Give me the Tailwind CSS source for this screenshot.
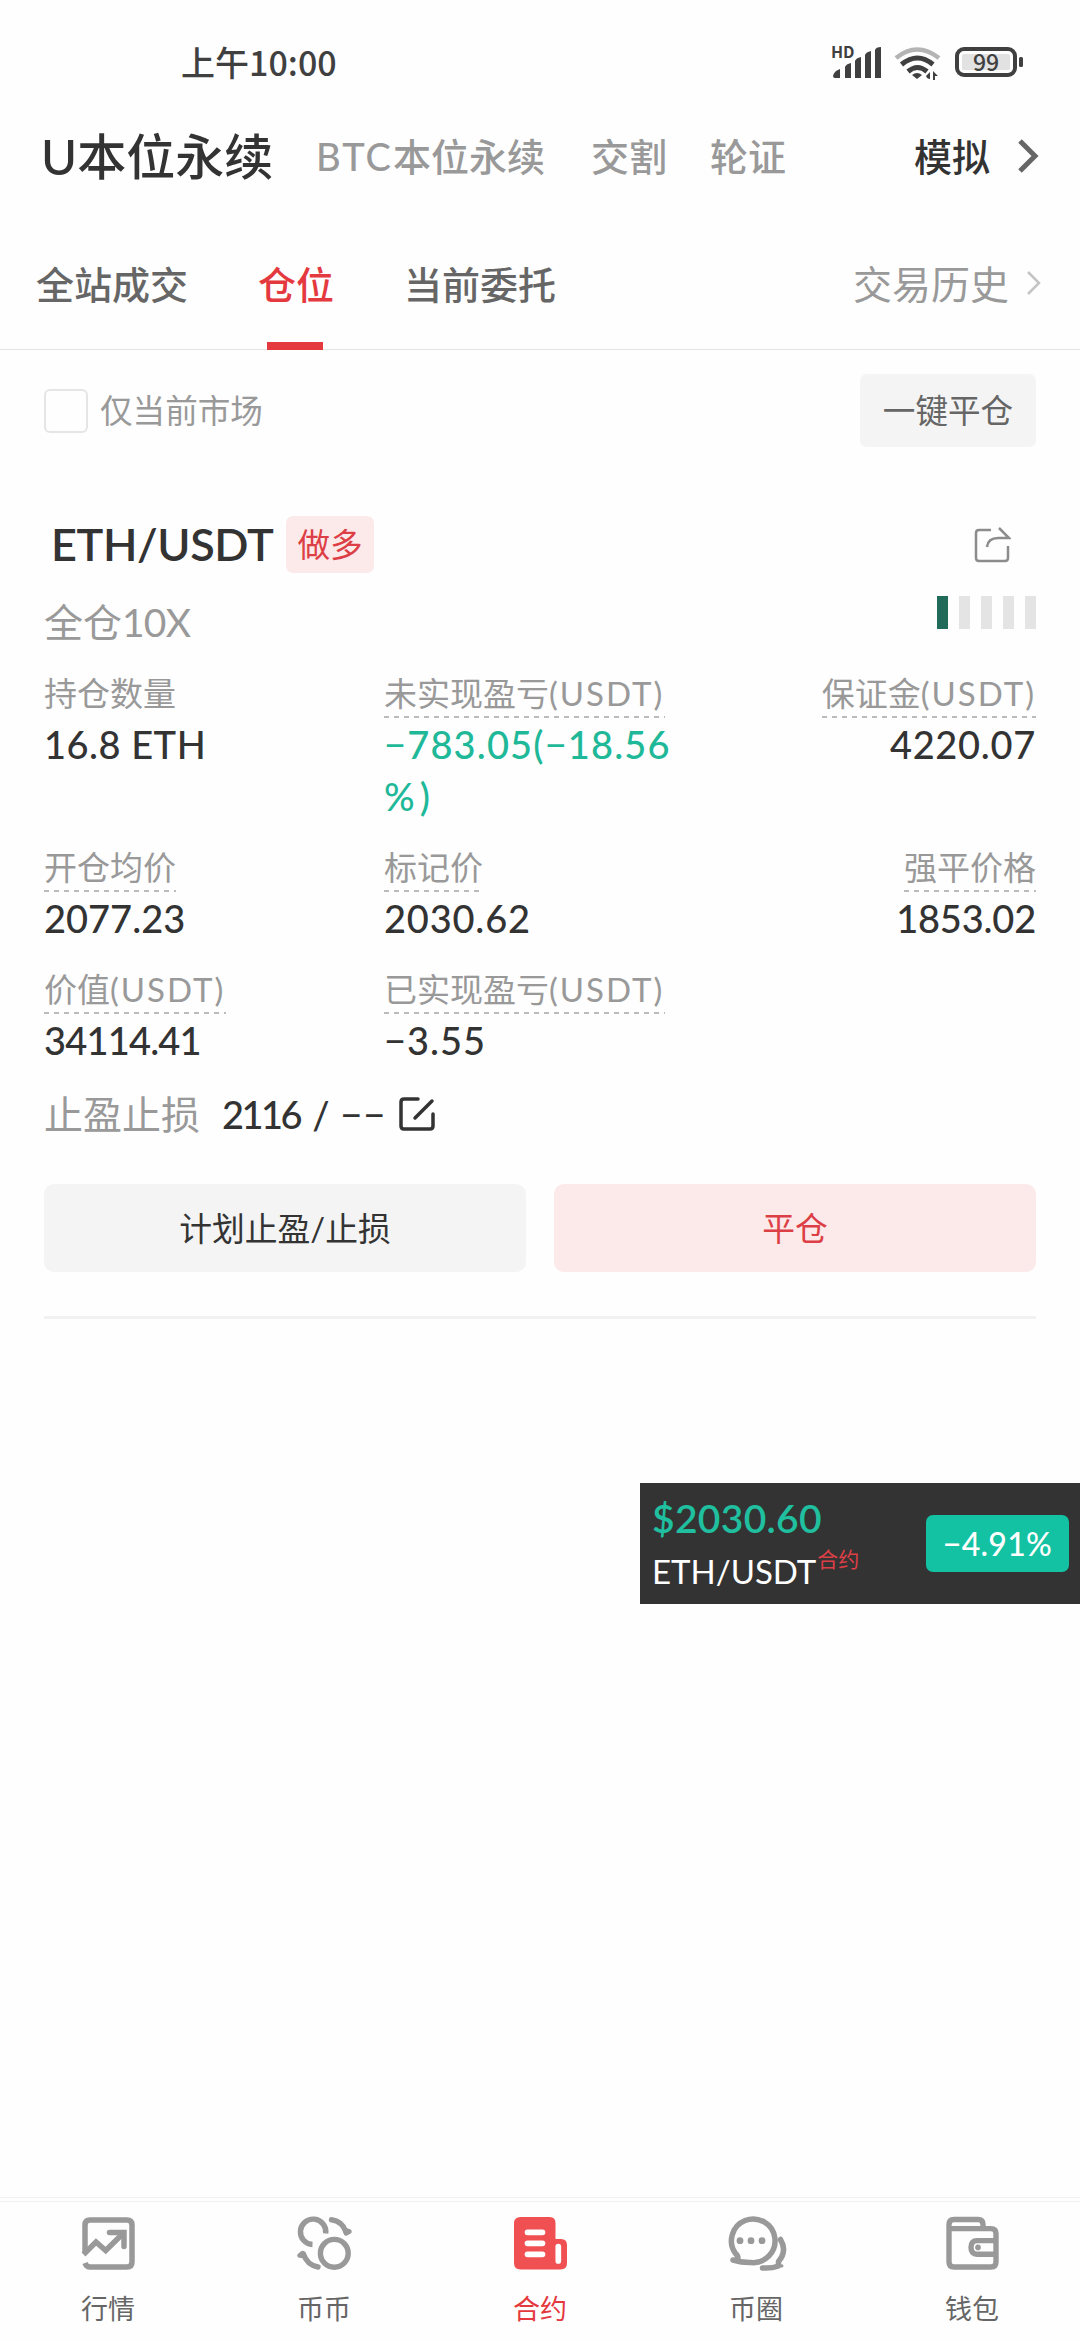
<!DOCTYPE html>
<html lang="zh-CN">
<head>
<meta charset="utf-8">
<title>合约</title>
<script src="https://cdn.jsdelivr.net/npm/@tailwindcss/browser@4"></script>
</head>
<body class="bg-[#fefefe]">
<div class="relative flex h-[2340px] w-[1080px] flex-col overflow-hidden bg-[#fefefe] font-['Lato','Noto_Sans_CJK_SC',sans-serif] text-[#333]">

  <!-- status bar -->
  <header class="flex h-[124px] shrink-0 items-center justify-between pr-[56px] pl-[181px]">
    <span class="font-['Noto_Sans_CJK_SC',sans-serif] text-[34px] leading-[40px] font-medium text-[#404040]">上午10:00</span>
    <svg class="h-[60px] w-[198px] overflow-visible" viewBox="826 32 198 60" fill="#404040">
      <text x="831" y="58" font-size="16" font-weight="700" font-family="Noto Sans CJK SC, sans-serif">HD</text>
      <path d="M833 76q1-5 7-7v9h-5q-2 0-2-2zM845 67q1-3 6-4v15h-6zM855 61q1-3 6-4v21h-6zM865 55q1-3 6-4v27h-6zM875 50q1-3 6-3v31h-6z"/>
      <path d="M896 58q21-17 43 0" fill="none" stroke="#b4b4b4" stroke-width="4.5"/>
      <path d="M901.500 64.500q16-13 31.500 0M908 71.500q9.500-8 19 0" fill="none" stroke="#404040" stroke-width="5"/>
      <path d="M912 75q5-4 10 0l-5 4zM926 76l4-4v7q-3 0-4-3zM933 80v-9l5 5h-3v4z"/>
      <rect x="957" y="49" width="58" height="26" rx="7" fill="none" stroke="#404040" stroke-width="4"/>
      <rect x="962" y="54" width="48" height="16" rx="2" fill="#e2e2e2"/>
      <rect x="1019" y="57" width="4" height="10" rx="1.500"/>
      <text x="986" y="70.500" font-size="23" font-weight="500" text-anchor="middle" font-family="Noto Sans CJK SC, sans-serif">99</text>
    </svg>
  </header>

  <!-- market types -->
  <nav class="flex h-[64px] shrink-0 items-center pr-[41px] pl-[41px] text-[38px] leading-[64px] font-medium text-[#999]">
    <span class="w-[275px] text-[49px] text-[#333]">U本位永续</span>
    <span class="w-[275px]"><span class="tracking-[2px]">BTC</span>本位永续</span>
    <span class="w-[119px]">交割</span>
    <span>轮证</span>
    <span class="ml-auto text-[#333]">模拟</span>
    <svg class="ml-[28px] h-[34px] w-[21px]" viewBox="0 0 21 34" fill="none" stroke="#666" stroke-width="5"><path d="M2 2l15 15L2 32"/></svg>
  </nav>

  <!-- tabs -->
  <nav class="flex h-[162px] shrink-0 items-end border-b border-[#e2e5e6] pr-[38px] pl-[36px] text-[38px] leading-[130px] font-medium text-[#666]">
    <span class="w-[222px]">全站成交</span>
    <span class="relative w-[146px] text-[#e4393f]">仓位<i class="absolute bottom-[-1px] left-[9px] h-[8px] w-[56px] bg-[#e4393f]"></i></span>
    <span>当前委托</span>
    <span class="ml-auto text-[39px] font-normal text-[#999]">交易历史</span>
    <svg class="mb-[54px] ml-[17px] h-[24px] w-[16px]" viewBox="0 0 16 24" fill="none" stroke="#c4c4c4" stroke-width="2.500"><path d="M2 1l11 11L2 23"/></svg>
  </nav>

  <main class="flex flex-col px-[44px]">
    <div class="mt-[24px] flex h-[73px] items-center">
      <span class="h-[44px] w-[44px] rounded-[6px] border-[2.5px] border-[#e5e5e5]"></span>
      <span class="ml-[12px] text-[32.6px] leading-[73px] text-[#999]">仅当前市场</span>
      <span class="ml-auto w-[176px] rounded-[7px] bg-[#f4f4f4] text-center text-[32.6px] leading-[73px] text-[#666]">一键平仓</span>
    </div>

    <div class="mt-[69px] flex h-[57px] items-center">
      <h1 class="ml-[7px] w-[235px] text-[45px] leading-[57px] font-semibold tracking-[-0.4px]">ETH/USDT</h1>
      <span class="w-[88px] rounded-[7px] bg-[#fceaea] text-center text-[32.6px] leading-[57px] text-[#dd3f46]">做多</span>
      <svg class="mr-[25px] ml-auto h-[36px] w-[38px]" viewBox="0 0 38 36" fill="none" stroke="#8c8c8c" stroke-width="2.500"><path d="M18 3H6Q3 3 3 6v25q0 3 3 3h26q3 0 3-3V19M14 20q1-9 11-9h11L26 1"/></svg>
    </div>

    <div class="mt-[19px] flex h-[60px] items-center justify-between text-[39px] leading-[60px] text-[#999]">
      <span>全仓<span class="tracking-[-0.8px]">10X</span></span>
      <span class="mb-[19px] flex gap-[11px]"><i class="h-[33px] w-[11px] bg-[#216b5b]"></i><i class="h-[33px] w-[11px] bg-[#e4e4e4]"></i><i class="h-[33px] w-[11px] bg-[#e4e4e4]"></i><i class="h-[33px] w-[11px] bg-[#e4e4e4]"></i><i class="h-[33px] w-[11px] bg-[#e4e4e4]"></i></span>
    </div>

    <!-- position figures -->
    <dl class="mt-[16px] grid grid-cols-[340px_340px_312px] gap-y-[20px] text-[38px] leading-[52px] font-medium">
      <div>
        <dt class="h-[50px] text-[33px] leading-[50px] font-normal text-[#999]">持仓数量</dt>
        <dd class="tracking-[0.5px]">16.8 ETH</dd>
      </div>
      <div>
        <dt class="h-[50px] w-[281px] bg-[repeating-linear-gradient(90deg,#bbb_0_5px,transparent_5px_10px)] bg-[length:100%_2px] bg-bottom bg-no-repeat text-[33px] leading-[50px] font-normal whitespace-nowrap text-[#999]">未实现盈亏<span class="tracking-[2px]">(USDT)</span></dt>
        <dd class="tracking-[1.15px] text-[#1fb898]">−783.05(−18.56<br>%<span class="ml-[4px]">)</span></dd>
      </div>
      <div class="flex flex-col items-end">
        <dt class="h-[50px] bg-[repeating-linear-gradient(90deg,#bbb_0_5px,transparent_5px_10px)] bg-[length:100%_2px] bg-bottom bg-no-repeat text-[33px] leading-[50px] font-normal text-[#999]">保证金<span class="tracking-[2px]">(USDT)</span></dt>
        <dd class="tracking-[0.7px]">4220.07</dd>
      </div>
      <div>
        <dt class="h-[50px] w-[132px] bg-[repeating-linear-gradient(90deg,#bbb_0_5px,transparent_5px_10px)] bg-[length:100%_2px] bg-bottom bg-no-repeat text-[33px] leading-[50px] font-normal text-[#999]">开仓均价</dt>
        <dd>2077.23</dd>
      </div>
      <div>
        <dt class="h-[50px] w-[96px] bg-[repeating-linear-gradient(90deg,#bbb_0_5px,transparent_5px_10px)] bg-[length:100%_2px] bg-bottom bg-no-repeat text-[33px] leading-[50px] font-normal whitespace-nowrap text-[#999]">标记价</dt>
        <dd class="tracking-[0.8px]">2030.62</dd>
      </div>
      <div class="flex flex-col items-end">
        <dt class="h-[50px] w-[132px] bg-[repeating-linear-gradient(90deg,#bbb_0_5px,transparent_5px_10px)] bg-[length:100%_2px] bg-bottom bg-no-repeat text-[33px] leading-[50px] font-normal text-[#999]">强平价格</dt>
        <dd class="tracking-[-0.2px]">1853.02</dd>
      </div>
      <div>
        <dt class="h-[50px] w-[182px] bg-[repeating-linear-gradient(90deg,#bbb_0_5px,transparent_5px_10px)] bg-[length:100%_2px] bg-bottom bg-no-repeat text-[33px] leading-[50px] font-normal whitespace-nowrap text-[#999]">价值<span class="tracking-[2px]">(USDT)</span></dt>
        <dd class="tracking-[-0.8px]">34114.41</dd>
      </div>
      <div>
        <dt class="h-[50px] w-[281px] bg-[repeating-linear-gradient(90deg,#bbb_0_5px,transparent_5px_10px)] bg-[length:100%_2px] bg-bottom bg-no-repeat text-[33px] leading-[50px] font-normal whitespace-nowrap text-[#999]">已实现盈亏<span class="tracking-[2px]">(USDT)</span></dt>
        <dd class="tracking-[1px]">−3.55</dd>
      </div>
    </dl>

    <div class="mt-[18px] flex h-[60px] items-center text-[38px] leading-[60px] font-medium">
      <span class="w-[178px] text-[39px] font-normal text-[#999]">止盈止损</span>
      <span class="w-[176px] whitespace-nowrap"><span class="tracking-[-2.5px]">2116</span><span class="ml-[2px] tracking-[0.5px]"> / </span><span class="tracking-[1px]">−−</span></span>
      <svg class="h-[36px] w-[38px]" viewBox="0 0 38 36" fill="none" stroke="#333" stroke-width="3.500" stroke-linecap="round"><path d="M20 3H6Q3 3 3 6v24q0 3 3 3h26q3 0 3-3V18M17 22L34 5"/></svg>
    </div>

    <div class="mt-[40px] grid h-[88px] grid-cols-2 gap-[28px] text-center text-[32.8px] leading-[89px]">
      <span class="h-[88px] rounded-[10px] bg-[#f4f4f4]">计划止盈/止损</span>
      <span class="h-[88px] rounded-[10px] bg-[#fceaea] text-[#dd3f46]">平仓</span>
    </div>
    <hr class="mt-[44px] border-t-[3px] border-[#f1f1f1]">
  </main>

  <!-- floating ticker -->
  <aside class="absolute top-[1483px] left-[640px] flex h-[121px] w-[440px] items-center justify-between bg-[#333] pr-[11px] pl-[12px]">
    <div class="flex flex-col">
      <span class="text-[39px] leading-[54px] font-semibold tracking-[0.3px] text-[#1fbf9f]">$2030.60</span>
      <span class="flex text-[33px] leading-[52px] text-white">ETH/USDT<sup class="top-0 ml-[1px] text-[21px] leading-[28px] text-[#dd3f46]">合约</sup></span>
    </div>
    <span class="h-[57px] w-[143px] rounded-[7px] bg-[#12c2a2] text-center text-[32px] leading-[57px] font-medium tracking-[0.3px] text-white">−4.91%</span>
  </aside>

  <!-- bottom navigation -->
  <footer class="mt-auto h-[143px] shrink-0 border-t border-[#f1f1f1] pt-[3px]">
    <div class="grid grid-cols-5 border-t border-[#f1f1f1] pt-[11px] text-center text-[27px] leading-[36px] text-[#666]">
      <div class="flex flex-col items-center gap-[18px]">
        <svg class="h-[60px] w-[64px]" viewBox="0 0 64 60" fill="none" stroke="#999" stroke-width="5.500">
          <path d="M9 40V12q0-5 5-5h37q5 0 5 5v37q0 5-5 5H14q-3.500 0-5-4"/>
          <path d="M7.500 41.500L20 29l9.700 8.500L47 20.500"/>
          <path d="M33.500 19.500H48V33.500" stroke-linecap="round"/>
        </svg>
        行情
      </div>
      <div class="flex flex-col items-center gap-[18px]">
        <svg class="h-[60px] w-[64px]" viewBox="0 0 64 60" fill="none" stroke="#999" stroke-width="5.400">
          <path d="M33.700 20.500A12.700 12.700 0 1 0 20.500 31.500"/>
          <circle cx="42.300" cy="40.300" r="13.900"/>
          <path d="M39.500 6.800Q50 8 54 19M26 54Q15 52 11.500 41" stroke-linecap="round"/>
          <path d="M54 20.500L57.500 18.500L53 17zM10.500 40L7.500 42.500L12 43z" stroke-width="4.500" stroke-linejoin="round"/>
        </svg>
        币币
      </div>
      <div class="flex flex-col items-center gap-[18px] text-[#e4393f]">
        <svg class="h-[60px] w-[64px]" viewBox="0 0 64 60" fill="none">
          <path d="M12.500 4H41.500q6 0 6 6V26H53q6 0 6 6V50q0 6.500-6.500 6.500H12.500q-6.500 0-6.500-6.500V10.500Q6 4 12.500 4z" fill="#f05052"/>
          <path d="M19.500 19.300H34.500M19.500 30.300H34.500M19.500 41.300H34.500M50.300 33.500V48" stroke="#fefefe" stroke-width="5.700" stroke-linecap="round"/>
        </svg>
        合约
      </div>
      <div class="flex flex-col items-center gap-[18px]">
        <svg class="h-[60px] w-[64px]" viewBox="0 0 64 60" fill="none" stroke="#999" stroke-width="5.500" stroke-linecap="round" stroke-linejoin="round">
          <path d="M14 45.500q0-3-2.500-5A21.800 21.800 0 1 1 27 49.500q-9 .3-18-2.500" stroke-width="5.500"/>
          <path d="M56.500 26.500Q63.500 38 54.500 48.500V53Q48 55.500 38.500 55"/>
          <path d="M54 52L58 53" stroke-width="3"/>
          <g fill="#999" stroke="none"><circle cx="16" cy="27.700" r="3.400"/><circle cx="27" cy="27.700" r="3.400"/><circle cx="38" cy="27.700" r="3.400"/></g>
        </svg>
        币圈
      </div>
      <div class="flex flex-col items-center gap-[18px]">
        <svg class="h-[60px] w-[64px]" viewBox="0 0 64 60" fill="none" stroke="#999" stroke-width="5.400">
          <path d="M9 15.600H51q5 0 5 5V49q0 5-5 5H14q-5 0-5-5V11.500q0-5 5-5H38q5 0 5 5V15.600"/>
          <path d="M56 27.600H37q-6 0-6 6.800t6 6.800H56"/>
          <circle cx="38" cy="34.400" r="2.800" fill="#999" stroke="none"/>
        </svg>
        钱包
      </div>
    </div>
  </footer>
</div>
</body>
</html>
